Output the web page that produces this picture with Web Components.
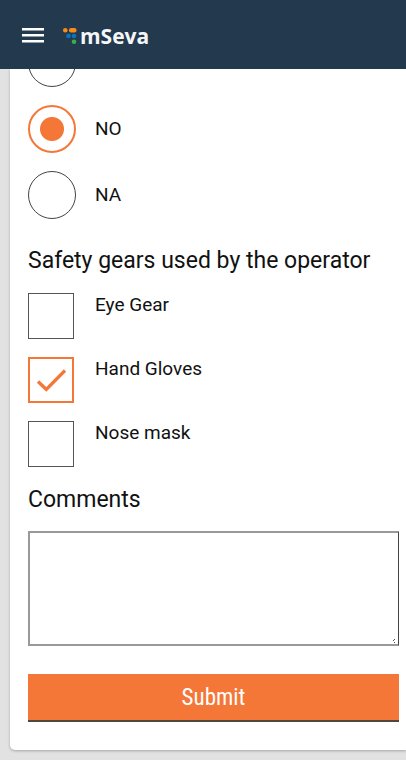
<!DOCTYPE html>
<html lang="en">
<head>
<meta charset="utf-8">
<meta name="viewport" content="width=device-width, initial-scale=1">
<title>mSeva</title>
<style>
body { margin: 0; min-height: 100vh; background: #e2e2e2; color: #111; font-family: Roboto, "Liberation Sans", sans-serif; }
</style>
</head>
<body>
<inspection-page></inspection-page>
<script>
const define = (name, html) => customElements.define(name, class extends HTMLElement {
  connectedCallback() {
    if (this.shadowRoot) return;
    this.attachShadow({ mode: "open" }).innerHTML = html(this);
  }
});

define("app-bar", () => `
<style>
:host { display: flex; align-items: center; box-sizing: border-box; height: 69px; padding: 0 20px; gap: 16px; background: #23394e; position: relative; z-index: 1; }
button { display: block; padding: 0; border: 0; background: none; color: #fff; }
svg { display: block; }
a { display: flex; align-items: center; gap: 2px; color: #f4f6f8; text-decoration: none; font: 700 21px/28px "Open Sans", "Noto Sans", sans-serif; padding-top: 3px; }
</style>
<button type="button" aria-label="Open menu"><svg width="26" height="18" viewBox="0 0 26 18" fill="#fff"><path d="M2 2h22v2.500H2zM2 8h22v2.500H2zM2 14h22v2.500H2z"/></svg></button>
<a href="#"><svg width="16" height="18" viewBox="0 0 16 18"><circle cx="3.300" cy="3.200" r="2.300" fill="#f58a1f"/><rect x="7" y="1" width="7.500" height="4.500" rx="2" fill="#f58a1f"/><circle cx="6.500" cy="9" r="2.300" fill="#0874bd"/><circle cx="12" cy="9" r="2.300" fill="#0874bd"/><circle cx="12" cy="14.800" r="2.300" fill="#39ae49"/></svg><span>mSeva</span></a>`);

define("radio-option", el => `
<style>
:host { display: block; }
label { display: flex; align-items: center; gap: 19px; font-size: 19px; line-height: 24px; }
input { appearance: none; box-sizing: border-box; flex: none; width: 48px; height: 48px; margin: 0; border: 1px solid #444; border-radius: 50%; background: #fff; }
input:checked { border: 2px solid #f47738; background: radial-gradient(circle, #f47738 11.500px, #fff 12.500px); }
</style>
<label><input type="radio" name="answer" ${el.hasAttribute("checked") ? "checked" : ""} ${el.hasAttribute("label") ? `aria-label="${el.getAttribute("label")}"` : ""}><slot></slot></label>`);

define("check-option", el => `
<style>
:host { display: block; }
label { display: flex; align-items: flex-start; gap: 21px; font-size: 19px; line-height: 24px; }
.box { display: grid; flex: none; width: 46px; height: 46px; }
.box > * { grid-area: 1 / 1; }
input { appearance: none; box-sizing: border-box; width: 46px; height: 46px; margin: 0; border: 1px solid #555; background: #fff; }
input:checked { border: 2px solid #f47738; }
svg { visibility: hidden; pointer-events: none; }
input:checked + svg { visibility: visible; }
</style>
<label><span class="box"><input type="checkbox" ${el.hasAttribute("checked") ? "checked" : ""}><svg width="46" height="46" viewBox="0 0 46 46" fill="none" stroke="#f47738" stroke-width="3.300"><path d="M10 24.500L18.300 32.500L37 13.500"/></svg></span><slot></slot></label>`);

define("comment-box", () => `
<style>
:host { display: block; }
label { display: block; font-size: 23px; line-height: 28px; }
textarea { display: block; box-sizing: border-box; width: 100%; height: 115px; margin: 0; padding: 8px; border: 2px solid #999; border-right: 1px solid #444; border-radius: 0; outline: 0; resize: none; font: 19px/24px Roboto, sans-serif; background: #fff; }
.field { display: grid; margin-top: 17px; }
.field > * { grid-area: 1 / 1; }
svg { align-self: end; justify-self: end; margin: 0 3px 3px 0; pointer-events: none; }
</style>
<label for="comments">Comments</label>
<div class="field"><textarea id="comments"></textarea><svg width="3" height="4" viewBox="0 0 3 4" fill="#555"><path d="M1 0h1v1H1zM0 1h1v1H0zM1 3h1v1H1z"/></svg></div>`);

define("submit-button", () => `
<style>
:host { display: block; }
button { display: block; box-sizing: border-box; width: 100%; height: 48px; padding: 2px 0 0; border: 0; border-bottom: 2px solid #50483f; border-radius: 0; background: #f47738; color: #fff; font: 23px/28px "Roboto Condensed", Roboto, sans-serif; }
</style>
<button type="submit"><slot></slot></button>`);

define("inspection-page", () => `
<style>
:host { display: block; }
main { padding: 0 0 10px 10px; }
form { margin: 0; background: #fff; border-radius: 0 0 0 5px; box-shadow: 0 1px 3px #0004; padding: 1px 7px 28px 18px; }
fieldset { display: flex; flex-direction: column; gap: 18px; min-width: 0; margin: 0; padding: 0; border: 0; }
.answers { margin-top: -31px; }
.gears { margin-top: 28px; }
legend { padding: 0; margin-bottom: 18px; font-size: 23px; line-height: 28px; }
comment-box { margin-top: 19px; }
submit-button { margin-top: 28px; }
</style>
<app-bar></app-bar>
<main><form>
<fieldset class="answers" aria-label="Answer">
<radio-option label="Yes"></radio-option>
<radio-option checked>NO</radio-option>
<radio-option>NA</radio-option>
</fieldset>
<fieldset class="gears">
<legend>Safety gears used by the operator</legend>
<check-option>Eye Gear</check-option>
<check-option checked>Hand Gloves</check-option>
<check-option>Nose mask</check-option>
</fieldset>
<comment-box></comment-box>
<submit-button>Submit</submit-button>
</form></main>`);
</script>
</body>
</html>
